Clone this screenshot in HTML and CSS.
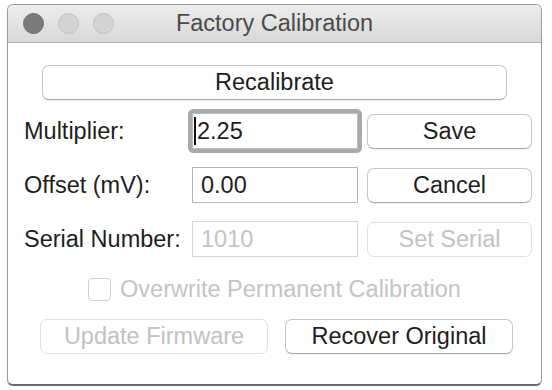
FILE: index.html
```html
<!DOCTYPE html>
<html>
  <head>
    <title>Factory Calibration</title>
    <link rel="stylesheet" href="styles.css">
  </head>
  <body>
    <div class="window">
      <div class="titlebar">
        <div class="lights">
          <span class="light close"></span>
          <span class="light"></span>
          <span class="light"></span>
        </div>
        <div class="title">Factory Calibration</div>
      </div>
      <div class="content">
        <button class="btn wide">Recalibrate</button>
        <div class="grid">
          <label>Multiplier:</label>
          <div class="field focused"><span class="caret"></span>2.25</div>
          <button class="btn">Save</button>

          <label>Offset (mV):</label>
          <div class="field">0.00</div>
          <button class="btn">Cancel</button>

          <label>Serial Number:</label>
          <div class="field disabled">1010</div>
          <button class="btn" disabled>Set Serial</button>
        </div>
        <div class="check disabled">
          <span class="box"></span>
          <span>Overwrite Permanent Calibration</span>
        </div>
        <div class="actions">
          <button class="btn" disabled>Update Firmware</button>
          <button class="btn">Recover Original</button>
        </div>
      </div>
    </div>
  </body>
</html>
```

FILE: styles.css
```css
* {
  box-sizing: border-box;
}
body {
  margin: 0;
  background: #fff;
  font-family: 'Liberation Sans', Arial, sans-serif;
  font-size: 23.5px;
  color: #1e1e1e;
}
.window {
  margin: 4px 0 0 7px;
  width: 535px;
  height: 382px;
  border: 1px solid #9a9a9a;
  border-bottom: 2px solid #6a6a6a;
  border-radius: 6px;
  background: #fff;
  overflow: hidden;
}
.titlebar {
  position: relative;
  height: 38px;
  background: linear-gradient(#ededed, #d8d8d8);
  border-bottom: 1px solid #b3b3b3;
  display: flex;
  align-items: center;
  justify-content: center;
}
.lights {
  position: absolute;
  left: 15px;
  top: 8px;
  display: flex;
  gap: 14px;
}
.light {
  width: 21px;
  height: 21px;
  border-radius: 50%;
  background: #d3d3d3;
  border: 1px solid #c0c0c0;
}
.light.close {
  background: #7b7b7b;
  border-color: #6b6b6b;
}
.title {
  color: #4b4b4b;
}
.content {
  padding-top: 22px;
}
.btn {
  font-family: inherit;
  font-size: inherit;
  color: #1e1e1e;
  background: #fff;
  border: 1px solid #c6c6c6;
  border-bottom-color: #a9a9a9;
  border-radius: 7px;
  height: 35px;
  padding: 0;
  box-shadow: 0 1px 1px rgba(0, 0, 0, 0.06);
}
.btn[disabled] {
  color: #c2c2c2;
  border-color: #e0e0e0;
  box-shadow: none;
}
.btn.wide {
  display: block;
  margin-left: 34px;
  width: 465px;
}
.grid {
  display: grid;
  grid-template-columns: 159px 166px 165px;
  grid-auto-rows: 36px;
  column-gap: 9px;
  row-gap: 18px;
  margin-top: 13px;
  padding-left: 16px;
  align-items: center;
}
.field {
  height: 36px;
  border: 1px solid #b4b4b4;
  padding-left: 8px;
  display: flex;
  align-items: center;
}
.field.focused {
  border-color: #bdbdbd;
  box-shadow: 0 0 0 4px #a9a9a9;
  border-radius: 2px;
  padding-left: 1px;
}
.caret {
  width: 2px;
  height: 28px;
  background: #111;
  margin-right: 1px;
}
.field.disabled {
  color: #c4c4c4;
  border-color: #d6d6d6;
}
.check {
  display: flex;
  justify-content: center;
  align-items: center;
  gap: 9px;
  margin-top: 21px;
  height: 23px;
}
.check.disabled {
  color: #c4c4c4;
}
.box {
  width: 23px;
  height: 23px;
  border: 1px solid #d0d0d0;
  border-radius: 4px;
}
.actions {
  display: flex;
  gap: 17px;
  margin-top: 18px;
  padding-left: 32px;
}
.actions .btn {
  width: 228px;
}
```
